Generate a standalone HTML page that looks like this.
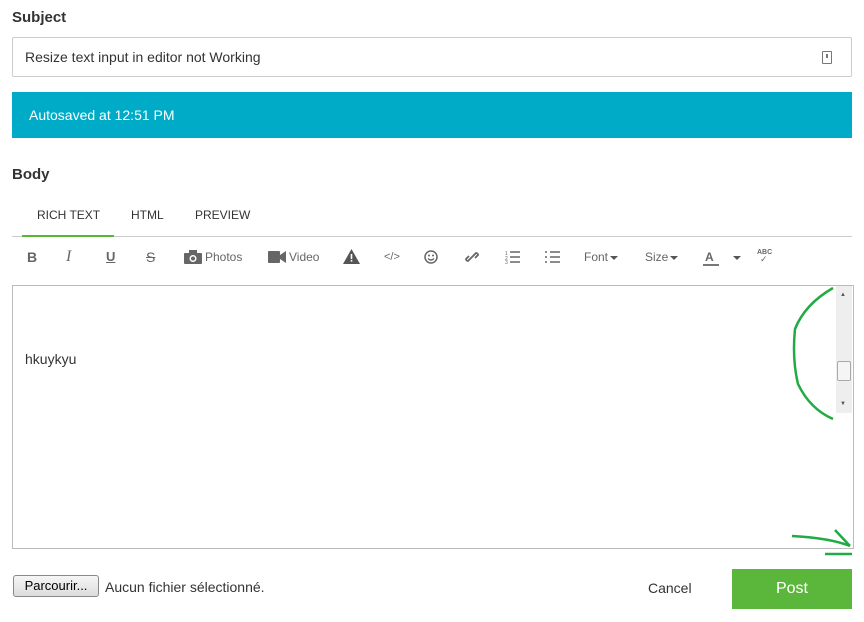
<!DOCTYPE html><html><head><style>
body{margin:0;width:864px;height:622px;background:#fff;font-family:"Liberation Sans",sans-serif;position:relative;overflow:hidden;color:#333}
.a{position:absolute}
.tb{position:absolute;top:249px;font-size:12px;color:#666;line-height:16px}
.tri{display:inline-block;width:0;height:0;border-left:4px solid transparent;border-right:4px solid transparent;border-top:4px solid #555;vertical-align:middle;margin-left:2px}
</style></head><body>
<div class="a" style="left:12px;top:9px;font-size:15px;font-weight:bold;color:#333">Subject</div>
<div class="a" style="left:12px;top:37px;width:838px;height:38px;border:1px solid #ccc;border-radius:2px"></div>
<div class="a" style="left:25px;top:49px;font-size:14px;color:#333">Resize text input in editor not Working</div>
<div class="a" style="left:822px;top:51px;width:8px;height:11px;border:1.5px solid #777;border-radius:1px"><div style="margin:2px auto 0;width:2px;height:4px;background:#777"></div></div>
<div class="a" style="left:12px;top:92px;width:840px;height:46px;background:#00abc7"></div>
<div class="a" style="left:29px;top:107px;font-size:14px;color:#fff">Autosaved at 12:51 PM</div>
<div class="a" style="left:12px;top:166px;font-size:15px;font-weight:bold;color:#333">Body</div>
<div class="a" style="left:37px;top:208px;font-size:12px;color:#333">RICH TEXT</div>
<div class="a" style="left:131px;top:208px;font-size:12px;color:#333">HTML</div>
<div class="a" style="left:195px;top:208px;font-size:12px;color:#333">PREVIEW</div>
<div class="a" style="left:12px;top:236px;width:840px;height:1px;background:#ccc"></div>
<div class="a" style="left:22px;top:235px;width:92px;height:2px;background:#5bb73b"></div>
<div class="tb" style="left:27px;font-weight:bold;font-size:14px">B</div>
<div class="tb" style="left:66px;font-style:italic;font-size:16px;font-family:'Liberation Serif',serif">I</div>
<div class="tb" style="left:106px;text-decoration:underline;font-weight:bold;font-size:13px">U</div>
<div class="tb" style="left:146px;text-decoration:line-through;font-size:14px">S</div>
<svg class="a" style="left:184px;top:250px" width="18" height="14"><rect x="0" y="3" width="18" height="11" rx="1" fill="#666"/><rect x="5" y="0" width="8" height="4" fill="#666"/><circle cx="9" cy="8.5" r="3.5" fill="#fff"/><circle cx="9" cy="8.5" r="2" fill="#666"/></svg>
<div class="tb" style="left:205px">Photos</div>
<svg class="a" style="left:268px;top:251px" width="18" height="12"><rect x="0" y="0" width="12" height="12" rx="1" fill="#666"/><path d="M12 4L18 0V12L12 8Z" fill="#666"/></svg>
<div class="tb" style="left:289px">Video</div>
<svg class="a" style="left:343px;top:249px" width="17" height="15"><path d="M8.5 0L17 15H0Z" fill="#555"/><rect x="7.7" y="5" width="1.6" height="5" fill="#fff"/><rect x="7.7" y="11" width="1.6" height="1.6" fill="#fff"/></svg>
<div class="tb" style="left:384px;font-size:11px">&lt;/&gt;</div>
<svg class="a" style="left:424px;top:250px" width="14" height="14"><circle cx="7" cy="7" r="6" fill="none" stroke="#666" stroke-width="1.5"/><circle cx="5" cy="5.5" r="1" fill="#666"/><circle cx="9" cy="5.5" r="1" fill="#666"/><path d="M4 8.5Q7 11.5 10 8.5" fill="none" stroke="#666" stroke-width="1.3"/></svg>
<svg class="a" style="left:465px;top:250px" width="14" height="14"><path d="M6 8L3 11A2 2 0 0 1 1 9L4 6M8 6L11 3A2 2 0 0 1 13 5L10 8M5 9L9 5" fill="none" stroke="#666" stroke-width="1.8"/></svg>
<svg class="a" style="left:505px;top:250px" width="15" height="14"><path d="M5 2H15M5 7H15M5 12H15" stroke="#666" stroke-width="1.6"/><text x="0" y="5" font-size="5" fill="#666">1</text><text x="0" y="10" font-size="5" fill="#666">2</text><text x="0" y="14" font-size="5" fill="#666">3</text></svg>
<svg class="a" style="left:545px;top:250px" width="15" height="14"><path d="M5 2H15M5 7H15M5 12H15M0 2H2M0 7H2M0 12H2" stroke="#666" stroke-width="1.6"/></svg>
<div class="tb" style="left:584px">Font<span class="tri"></span></div>
<div class="tb" style="left:645px">Size<span class="tri"></span></div>
<div class="tb" style="left:705px;font-weight:bold;font-size:12px">A</div>
<div class="a" style="left:703px;top:264px;width:16px;height:2px;background:#777"></div>
<div class="tb" style="left:731px"><span class="tri"></span></div>
<div class="a" style="left:757px;top:249px;font-size:7px;color:#666;font-weight:bold">ABC</div>
<div class="a" style="left:760px;top:254px;font-size:9px;color:#666">✓</div>
<div class="a" style="left:12px;top:285px;width:840px;height:262px;border:1px solid #bbb"></div>
<div class="a" style="left:836px;top:286px;width:16px;height:127px;background:#eee"></div>
<div class="a" style="left:840px;top:292px;font-size:6px;color:#555">▲</div>
<div class="a" style="left:840px;top:401px;font-size:6px;color:#555">▼</div>
<div class="a" style="left:837px;top:361px;width:12px;height:18px;border:1px solid #aaa;border-radius:2px;background:#f5f5f5"></div>
<div class="a" style="left:25px;top:351px;font-size:14px;color:#333">hkuykyu</div>
<svg class="a" style="left:780px;top:284px" width="84" height="300"><path d="M53 4Q25 20 15 45Q12 75 18 100Q30 125 53 135" fill="none" stroke="#22aa44" stroke-width="2.5"/><path d="M12 252Q50 254 70 262M55 246L70 262M45 270H72" fill="none" stroke="#22aa44" stroke-width="2.5"/></svg>
<div class="a" style="left:13px;top:575px;width:84px;height:20px;border:1px solid #888;border-radius:3px;background:linear-gradient(#f6f6f6,#dcdcdc);font-size:13px;color:#000;text-align:center;line-height:20px">Parcourir...</div>
<div class="a" style="left:105px;top:579px;font-size:14px;color:#333">Aucun fichier sélectionné.</div>
<div class="a" style="left:648px;top:580px;font-size:14px;color:#333">Cancel</div>
<div class="a" style="left:732px;top:569px;width:120px;height:40px;background:#5bb73b;color:#fff;font-size:16px;text-align:center;line-height:40px">Post</div>
</body></html>
